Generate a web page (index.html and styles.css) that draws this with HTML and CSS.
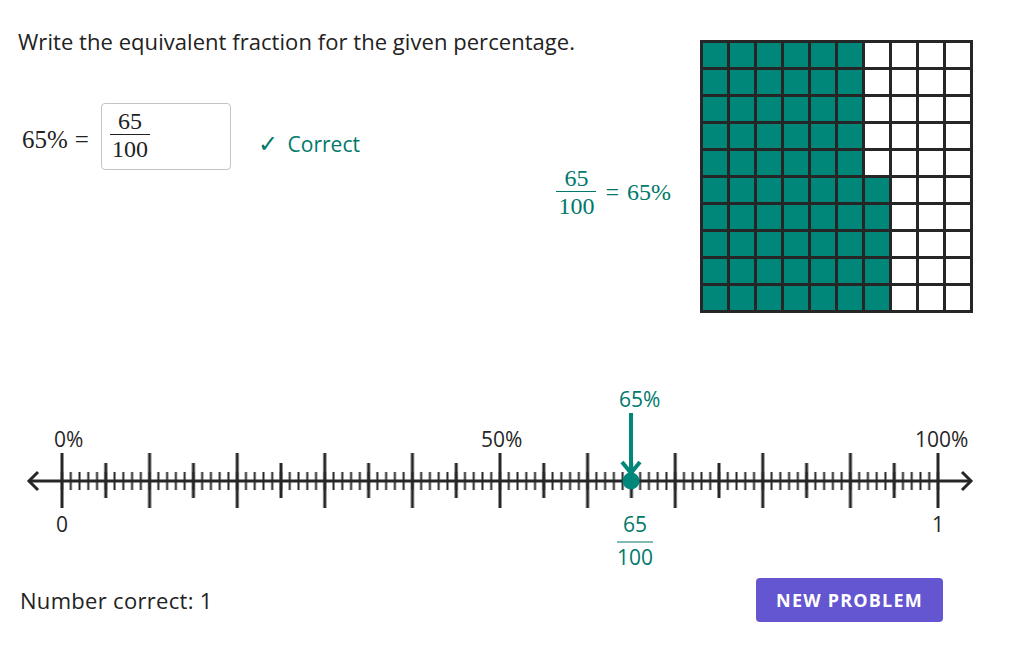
FILE: index.html
```html
<html>
	<head>
		<title>Percent to Fraction</title>
		<link rel="stylesheet" href="styles.css">
	</head>
	<body>
		<div class="page">
			<div class="top">
				<div class="task">
					<p class="prompt">Write the equivalent fraction for the given percentage.</p>
					<div class="answer">
						<span class="math">65%<span class="rel">=</span></span>
						<div class="input">
							<span class="frac"><span class="num">65</span><span class="den">100</span></span>
						</div>
						<span class="correct"><span class="tick">&#10003;</span> Correct</span>
					</div>
				</div>
				<div class="model">
					<div class="eq">
						<span class="frac"><span class="num">65</span><span class="den">100</span></span>
						<span class="rest"><span class="rel">=</span>65%</span>
					</div>
					<div class="grid">
						<div class="c f"></div><div class="c f"></div><div class="c f"></div><div class="c f"></div><div class="c f"></div><div class="c f"></div><div class="c"></div><div class="c"></div><div class="c"></div><div class="c"></div>
						<div class="c f"></div><div class="c f"></div><div class="c f"></div><div class="c f"></div><div class="c f"></div><div class="c f"></div><div class="c"></div><div class="c"></div><div class="c"></div><div class="c"></div>
						<div class="c f"></div><div class="c f"></div><div class="c f"></div><div class="c f"></div><div class="c f"></div><div class="c f"></div><div class="c"></div><div class="c"></div><div class="c"></div><div class="c"></div>
						<div class="c f"></div><div class="c f"></div><div class="c f"></div><div class="c f"></div><div class="c f"></div><div class="c f"></div><div class="c"></div><div class="c"></div><div class="c"></div><div class="c"></div>
						<div class="c f"></div><div class="c f"></div><div class="c f"></div><div class="c f"></div><div class="c f"></div><div class="c f"></div><div class="c"></div><div class="c"></div><div class="c"></div><div class="c"></div>
						<div class="c f"></div><div class="c f"></div><div class="c f"></div><div class="c f"></div><div class="c f"></div><div class="c f"></div><div class="c f"></div><div class="c"></div><div class="c"></div><div class="c"></div>
						<div class="c f"></div><div class="c f"></div><div class="c f"></div><div class="c f"></div><div class="c f"></div><div class="c f"></div><div class="c f"></div><div class="c"></div><div class="c"></div><div class="c"></div>
						<div class="c f"></div><div class="c f"></div><div class="c f"></div><div class="c f"></div><div class="c f"></div><div class="c f"></div><div class="c f"></div><div class="c"></div><div class="c"></div><div class="c"></div>
						<div class="c f"></div><div class="c f"></div><div class="c f"></div><div class="c f"></div><div class="c f"></div><div class="c f"></div><div class="c f"></div><div class="c"></div><div class="c"></div><div class="c"></div>
						<div class="c f"></div><div class="c f"></div><div class="c f"></div><div class="c f"></div><div class="c f"></div><div class="c f"></div><div class="c f"></div><div class="c"></div><div class="c"></div><div class="c"></div>
					</div>
				</div>
			</div>

			<svg class="numberline" width="1032" height="196" viewBox="0 380 1032 196">
				<defs>
					<pattern id="minor" patternUnits="userSpaceOnUse" x="57.62" y="0" width="8.76" height="1000">
						<line x1="4.38" y1="472" x2="4.38" y2="490" class="tick-minor"/>
					</pattern>
					<pattern id="mid" patternUnits="userSpaceOnUse" x="62" y="0" width="87.6" height="1000">
						<line x1="43.8" y1="463" x2="43.8" y2="498" class="tick-mid"/>
					</pattern>
					<pattern id="major" patternUnits="userSpaceOnUse" x="18.2" y="0" width="87.6" height="1000">
						<line x1="43.8" y1="453" x2="43.8" y2="508" class="tick-major"/>
					</pattern>
				</defs>
				<line x1="30" y1="481" x2="970" y2="481" class="axis"/>
				<polyline points="38,472 29,481 38,490" class="axis-head"/>
				<polyline points="962,472 971,481 962,490" class="axis-head"/>
				<rect x="57.62" y="460" width="884.76" height="40" fill="url(#minor)"/>
				<rect x="62" y="460" width="876" height="40" fill="url(#mid)"/>
				<rect x="18.2" y="450" width="963.6" height="60" fill="url(#major)"/>

				<text x="54" y="447" class="lbl">0%</text>
				<text x="481" y="447" class="lbl">50%</text>
				<text x="915" y="447" class="lbl">100%</text>
				<text x="62" y="532" class="lbl" text-anchor="middle">0</text>
				<text x="938" y="532" class="lbl" text-anchor="middle">1</text>

				<text x="619" y="407" class="lbl teal">65%</text>
				<line x1="631" y1="413" x2="631" y2="476" class="marker"/>
				<polyline points="622,462 631,473 640,462" class="marker-head"/>
				<circle cx="631" cy="481" r="8.5" class="dot"/>
				<text x="635" y="532" class="lbl teal" text-anchor="middle">65</text>
				<line x1="617" y1="542" x2="653" y2="542" class="fracbar"/>
				<text x="635" y="565" class="lbl teal" text-anchor="middle">100</text>
			</svg>

			<div class="footer">
				<span class="score">Number correct: 1</span>
				<button class="btn">NEW PROBLEM</button>
			</div>
		</div>
	</body>
</html>
```

FILE: styles.css
```css
body
{
	margin: 0;
	background: #ffffff;
	color: #222222;
	font-family: "Open Sans", "DejaVu Sans", sans-serif;
}

.page
{
	width: 1032px;
}

.top
{
	display: flex;
}

.task
{
	flex: 1;
	min-width: 0;
	padding: 27px 0 0 18px;
}

.prompt
{
	margin: 0;
	font-size: 22px;
	letter-spacing: 0.05px;
	line-height: 28px;
	white-space: nowrap;
}

.answer
{
	display: flex;
	align-items: center;
	margin-top: 48px;
}

.math
{
	font-family: "Liberation Serif", serif;
	font-size: 25px;
	margin: 7px 0 0 4px;
	width: 79px;
}

.rel
{
	margin: 0 8px 0 7px;
}

.input
{
	box-sizing: border-box;
	width: 130px;
	height: 67px;
	border: 1px solid #c4c4c4;
	border-radius: 4px;
	padding: 0 0 3px 8px;
	display: flex;
	align-items: center;
}

.frac
{
	display: inline-flex;
	flex-direction: column;
	align-items: center;
	font-family: "Liberation Serif", serif;
	font-size: 24px;
	line-height: 22px;
}

.frac .num
{
	padding: 0 2px 2px;
}

.frac .den
{
	border-top: 1px solid currentColor;
	padding: 3px 2px 0;
}

.correct
{
	margin-left: 27px;
	margin-top: 12px;
	color: #00796b;
	font-size: 21px;
}

.tick
{
	font-size: 24px;
	margin-right: 4px;
}

.model
{
	flex: none;
	display: flex;
	align-items: flex-start;
}

.eq
{
	margin-top: 167px;
	margin-right: 29px;
	display: flex;
	align-items: center;
	color: #00796b;
}

.eq .rel
{
	margin-left: 9px;
}

.rest
{
	font-family: "Liberation Serif", serif;
	font-size: 24px;
}

.grid
{
	flex: none;
	margin: 40px 59px 0 0;
	display: grid;
	grid-template-columns: repeat(10, 24px);
	grid-auto-rows: 24px;
	gap: 3px;
	padding: 3px;
	background: #262626;
}

.c
{
	background: #ffffff;
}

.c.f
{
	background: #00877a;
}

.numberline
{
	display: block;
	margin-top: 67px;
}

.axis, .axis-head
{
	stroke: #262626;
	stroke-width: 3;
	fill: none;
}

.tick-minor
{
	stroke: #262626;
	stroke-width: 2;
}

.tick-mid, .tick-major
{
	stroke: #262626;
	stroke-width: 3;
}

.lbl
{
	font-family: "Open Sans", "DejaVu Sans", sans-serif;
	font-size: 21px;
	fill: #262626;
}

.lbl.teal
{
	fill: #00796b;
}

.marker, .marker-head
{
	stroke: #00877a;
	stroke-width: 4;
	fill: none;
}

.dot
{
	fill: #00877a;
}

.fracbar
{
	stroke: #00796b;
	stroke-width: 1.2;
}

.footer
{
	display: flex;
	justify-content: space-between;
	align-items: center;
	margin-top: 2px;
	padding: 0 89px 0 20px;
}

.score
{
	font-size: 22px;
	letter-spacing: 0.3px;
}

.btn
{
	width: 187px;
	height: 44px;
	border: none;
	border-radius: 4px;
	background: #6455d0;
	color: #ffffff;
	font-family: "Open Sans", sans-serif;
	font-weight: 700;
	font-size: 18px;
	letter-spacing: 1.2px;
}
```
